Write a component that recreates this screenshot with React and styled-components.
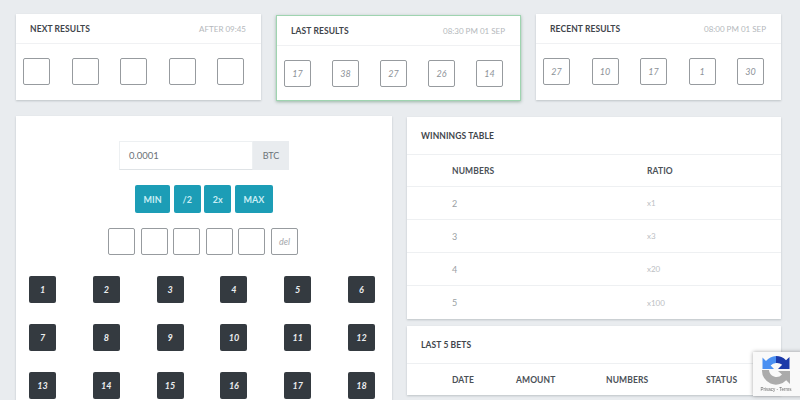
import React from 'react'
import styled, { createGlobalStyle } from 'styled-components'

const GlobalStyle = createGlobalStyle`
  html, body { margin: 0; padding: 0; height: 100%; overflow: hidden; background: #e9ecef; }
  body { font-family: Lato, "Open Sans", sans-serif; color: #343a40; }
`

const Page = styled.div`
  width: 800px;
  height: 400px;
  box-sizing: border-box;
  padding: 14px 19px 0 16px;
  overflow: hidden;
`

const TopRow = styled.div`
  display: grid;
  grid-template-columns: repeat(3, 245px);
  column-gap: 15px;
  margin-bottom: 15px;
`

const Card = styled.div`
  background: #fff;
  box-sizing: border-box;
  box-shadow: 0 1px 2px rgba(60, 70, 80, 0.25);
`

const ResultCard = styled(Card)`
  height: 86px;
  ${p => p.$active && `
    border: 1px solid #9fd4b0;
    box-shadow: 0 1px 3px rgba(60, 110, 80, 0.45);
    margin-top: 1px;
  `}
`

const ResultHead = styled.div`
  height: 30px;
  box-sizing: border-box;
  padding: 0 15px 0 14px;
  display: flex;
  align-items: center;
  justify-content: space-between;
  border-bottom: 1px solid #f0f1f3;
`

const Title = styled.span`
  font-size: 8.5px;
  font-weight: 700;
  letter-spacing: 0.1px;
  color: #3f454b;
`

const Time = styled.span`
  font-size: 8px;
  color: #b4b8bc;
`

const Balls = styled.div`
  display: flex;
  justify-content: space-between;
  padding: 14px 17px 0 7px;
`

const Ball = styled.div`
  width: 27px;
  height: 27px;
  box-sizing: border-box;
  border: 1px solid #979b9f;
  border-radius: 2px;
  display: flex;
  align-items: center;
  justify-content: center;
  font-size: 9px;
  font-style: italic;
  color: #8d9298;
`

const MainRow = styled.div`
  display: grid;
  grid-template-columns: 376px 374px;
  column-gap: 15px;
  align-items: start;
`

const BetCard = styled(Card)`
  height: 320px;
  padding-top: 25px;
`

const AmountGroup = styled.div`
  display: flex;
  justify-content: center;
  margin-bottom: 15px;
`

const AmountInput = styled.div`
  width: 134px;
  height: 29px;
  box-sizing: border-box;
  border: 1px solid #edf0f2;
  border-bottom-color: #dfe3e6;
  padding-left: 9px;
  display: flex;
  align-items: center;
  font-size: 9.5px;
  color: #6c7277;
`

const AmountAddon = styled.div`
  width: 36px;
  height: 29px;
  background: #e9ecef;
  display: flex;
  align-items: center;
  justify-content: center;
  font-size: 9px;
  color: #6c7277;
`

const Actions = styled.div`
  display: flex;
  justify-content: center;
  gap: 3.6px;
  margin-bottom: 15px;
`

const ActionButton = styled.button`
  width: ${p => p.$w}px;
  height: 28px;
  padding: 0;
  border: 0;
  border-radius: 2px;
  background: #1c9db6;
  color: #c9eef5;
  font-family: inherit;
  font-size: 9px;
  font-weight: 700;
`

const Picks = styled.div`
  display: flex;
  justify-content: center;
  gap: 5.6px;
  margin-bottom: 21px;
  padding-right: 2px;
`

const Pick = styled(Ball)`
  color: #a5a9ad;
`

const NumberGrid = styled.div`
  display: grid;
  grid-template-columns: repeat(6, 27px);
  justify-content: space-between;
  row-gap: 21px;
  padding: 0 17px 0 13px;
`

const NumberButton = styled.button`
  width: 27px;
  height: 27px;
  padding: 0;
  border: 0;
  border-radius: 2px;
  background: #343a40;
  color: #eceef0;
  font-family: inherit;
  font-size: 9px;
  font-weight: 700;
  font-style: italic;
`

const SideColumn = styled.div`
  display: flex;
  flex-direction: column;
  gap: 7px;
  margin-top: 1px;
`

const SideHead = styled.div`
  height: 38px;
  box-sizing: border-box;
  padding: 0 14px;
  display: flex;
  align-items: center;
  border-bottom: 1px solid #eef0f2;
`

const Row = styled.div`
  display: grid;
  grid-template-columns: ${p => p.$cols};
  align-items: center;
  height: ${p => p.$h || 33}px;
  box-sizing: border-box;
  padding-left: 45px;
  font-size: 9px;
  color: #9a9fa4;
  border-bottom: 1px solid #eef0f2;
  &:last-child { border-bottom: 0; }
`

const HeadCell = styled.span`
  font-size: 8.5px;
  font-weight: 700;
  letter-spacing: 0.1px;
  color: #4b5157;
`

const Ratio = styled.span`
  font-size: 8px;
  color: #bcc0c4;
`

const Recaptcha = styled.div`
  position: fixed;
  left: 753px;
  top: 352px;
  width: 50px;
  height: 44px;
  background: #f9f9f9;
  box-shadow: 0 0 4px rgba(0, 0, 0, 0.35);
  display: flex;
  flex-direction: column;
  align-items: center;
  padding: 3px 4px 0 0;
  box-sizing: border-box;
`

const RecaptchaText = styled.span`
  font-family: "Liberation Sans", sans-serif;
  font-size: 4.5px;
  color: #666;
  margin-top: 2px;
  white-space: nowrap;
`

const results = [
  { title: 'NEXT RESULTS', time: 'AFTER 09:45', balls: ['', '', '', '', ''] },
  { title: 'LAST RESULTS', time: '08:30 PM 01 SEP', balls: [17, 38, 27, 26, 14], active: true },
  { title: 'RECENT RESULTS', time: '08:00 PM 01 SEP', balls: [27, 10, 17, 1, 30] },
]

const winnings = [[2, 'x1'], [3, 'x3'], [4, 'x20'], [5, 'x100']]

function RecaptchaLogo() {
  return (
    <svg width="30" height="30" viewBox="0 0 30 30">
      <path d="M15 1a14 14 0 0 1 10 4.2L28.5 2v12H17l4.2-4.2A8 8 0 0 0 15 8V1z" fill="#1c3aa9" />
      <path d="M15 1v7a8 8 0 0 0-5.4 2.4L13 14H1.5V2.5L5 6a14 14 0 0 1 10-5z" fill="#4a90f2" />
      <path d="M1 15h7a7.5 7.5 0 0 0 13 4.6L17 16h12v13l-3.8-3.8A14 14 0 0 1 1 15z" fill="#ababab" />
    </svg>
  )
}

export default function App() {
  return (
    <Page>
      <GlobalStyle />
      <TopRow>
        {results.map(r => (
          <ResultCard key={r.title} $active={r.active}>
            <ResultHead>
              <Title>{r.title}</Title>
              <Time>{r.time}</Time>
            </ResultHead>
            <Balls>
              {r.balls.map((b, i) => <Ball key={i}>{b}</Ball>)}
            </Balls>
          </ResultCard>
        ))}
      </TopRow>
      <MainRow>
        <BetCard>
          <AmountGroup>
            <AmountInput>0.0001</AmountInput>
            <AmountAddon>BTC</AmountAddon>
          </AmountGroup>
          <Actions>
            <ActionButton $w={35}>MIN</ActionButton>
            <ActionButton $w={27}>/2</ActionButton>
            <ActionButton $w={27}>2x</ActionButton>
            <ActionButton $w={38}>MAX</ActionButton>
          </Actions>
          <Picks>
            {[0, 1, 2, 3, 4].map(i => <Pick key={i} />)}
            <Pick>del</Pick>
          </Picks>
          <NumberGrid>
            {Array.from({ length: 18 }, (_, i) => (
              <NumberButton key={i}>{i + 1}</NumberButton>
            ))}
          </NumberGrid>
        </BetCard>
        <SideColumn>
          <Card>
            <SideHead><Title>WINNINGS TABLE</Title></SideHead>
            <Row $cols="195px 1fr" $h={32}>
              <HeadCell>NUMBERS</HeadCell>
              <HeadCell>RATIO</HeadCell>
            </Row>
            {winnings.map(([n, x]) => (
              <Row $cols="195px 1fr" key={n}>
                <span>{n}</span>
                <Ratio>{x}</Ratio>
              </Row>
            ))}
          </Card>
          <Card>
            <SideHead><Title>LAST 5 BETS</Title></SideHead>
            <Row $cols="64px 90px 100px 1fr" $h={31}>
              <HeadCell>DATE</HeadCell>
              <HeadCell>AMOUNT</HeadCell>
              <HeadCell>NUMBERS</HeadCell>
              <HeadCell>STATUS</HeadCell>
            </Row>
          </Card>
        </SideColumn>
      </MainRow>
      <Recaptcha>
        <RecaptchaLogo />
        <RecaptchaText>Privacy - Terms</RecaptchaText>
      </Recaptcha>
    </Page>
  )
}
